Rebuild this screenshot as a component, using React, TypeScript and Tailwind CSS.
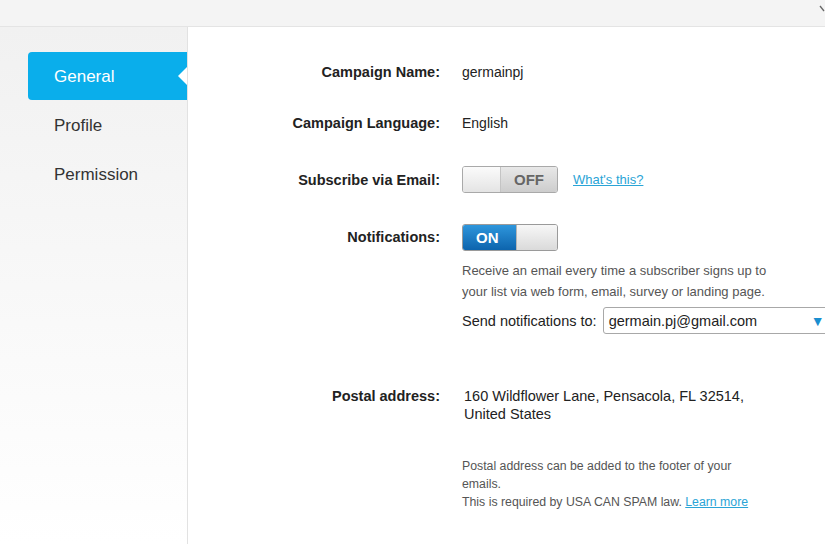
import React from 'react';

const navItems = ['General', 'Profile', 'Permission'];

function Toggle({ on }: { on: boolean }) {
  if (on) {
    return (
      <div className="flex h-[27px] w-[96px] overflow-hidden rounded-[3px] border border-[#9a9a9a]">
        <div className="flex w-[53px] items-center bg-gradient-to-b from-[#2e96dc] to-[#0c64ad] pl-[13px] text-[15px] font-bold text-white">
          ON
        </div>
        <div className="flex-1 border-l border-[#b5b5b5] bg-gradient-to-b from-[#f7f7f7] to-[#dadada]" />
      </div>
    );
  }
  return (
    <div className="flex h-[27px] w-[96px] overflow-hidden rounded-[3px] border border-[#a9a9a9]">
      <div className="w-[38px] border-r border-[#c4c4c4] bg-gradient-to-b from-[#fbfbfb] to-[#e4e4e4]" />
      <div className="flex flex-1 items-center justify-center bg-gradient-to-b from-[#e8e8e8] to-[#cdcdcd] text-[15px] font-bold text-[#666]">
        OFF
      </div>
    </div>
  );
}

function Row({
  label,
  children,
  className = '',
  labelClass = '',
}: {
  label: string;
  children: React.ReactNode;
  className?: string;
  labelClass?: string;
}) {
  return (
    <div className={`flex ${className}`}>
      <div className={`w-[252px] shrink-0 text-right text-[14.5px] font-bold text-[#222] ${labelClass}`}>{label}</div>
      <div className="ml-[22px] flex-1">{children}</div>
    </div>
  );
}

export default function App() {
  const [active, setActive] = React.useState('General');

  return (
    <div className="flex h-[544px] w-[825px] flex-col overflow-hidden bg-white font-['Liberation_Sans',Arial,sans-serif] text-[#222]">
      <div className="relative h-[27px] shrink-0 border-b border-[#e4e4e4] bg-[#f4f4f4]">
        <svg className="absolute right-0 top-[5px]" width="6" height="8" viewBox="0 0 6 8">
          <path d="M1 1 L5 6" stroke="#666" strokeWidth="1.3" fill="none" />
        </svg>
      </div>

      <div className="flex flex-1">
        <aside className="w-[188px] shrink-0 border-r border-[#e2e2e2] bg-gradient-to-b from-[#f1f1f1] to-[#ffffff] pt-[25px]">
          <nav className="flex flex-col pl-[28px]">
            {navItems.map((item) => {
              const isActive = item === active;
              return (
                <button
                  key={item}
                  onClick={() => setActive(item)}
                  className={`relative flex items-center pl-[26px] text-left text-[17px] ${
                    isActive ? 'h-[48px] rounded-l-[4px] bg-[#0aaeeb] pt-[2px] text-white' : 'h-[49px] pt-[3px] text-[#333]'
                  }`}
                >
                  {item}
                  {isActive && (
                    <span className="absolute right-0 top-[15px] h-0 w-0 border-y-[9px] border-r-[9px] border-y-transparent border-r-white" />
                  )}
                </button>
              );
            })}
          </nav>
        </aside>

        <main className="flex flex-1 flex-col pt-[35px] leading-[20px]">
          <Row label="Campaign Name:">
            <span className="text-[14px]">germainpj</span>
          </Row>

          <Row label="Campaign Language:" className="mt-[31px]">
            <span className="text-[14px]">English</span>
          </Row>

          <Row label="Subscribe via Email:" className="mt-[33px] items-center">
            <div className="flex items-center">
              <Toggle on={false} />
              <a href="#" className="ml-[15px] text-[13px] text-[#2aa4d6] underline">
                What's this?
              </a>
            </div>
          </Row>

          <Row label="Notifications:" className="mt-[31px]" labelClass="leading-[27px]">
            <Toggle on={true} />
            <p className="mt-[9px] w-[310px] text-[13px] leading-[21px] text-[#555]">
              Receive an email every time a subscriber signs up to your list via web form, email, survey or landing page.
            </p>
            <div className="mt-[5px] flex items-center whitespace-nowrap">
              <span className="shrink-0 text-[14.5px] text-[#222]">Send notifications to:</span>
              <div className="ml-[6px] flex h-[27px] w-[240px] shrink-0 items-center justify-between rounded-[3px] border border-[#a8a8a8] pl-[5px] pr-[17px]">
                <span className="text-[14.5px]">germain.pj@gmail.com</span>
                <span className="text-[14px] text-[#1a8fd0]">▼</span>
              </div>
            </div>
          </Row>

          <Row label="Postal address:" className="mt-[53px] leading-[18px]">
            <p className="ml-[2px] text-[14.5px] leading-[18px]">
              160 Wildflower Lane, Pensacola, FL 32514,
              <br />
              United States
            </p>
            <p className="mt-[34px] w-[290px] text-[12.3px] leading-[18px] text-[#555]">
              Postal address can be added to the footer of your emails.
              <br />
              This is required by USA CAN SPAM law.{' '}
              <a href="#" className="text-[#2aa4d6] underline">
                Learn more
              </a>
            </p>
          </Row>
        </main>
      </div>
    </div>
  );
}
